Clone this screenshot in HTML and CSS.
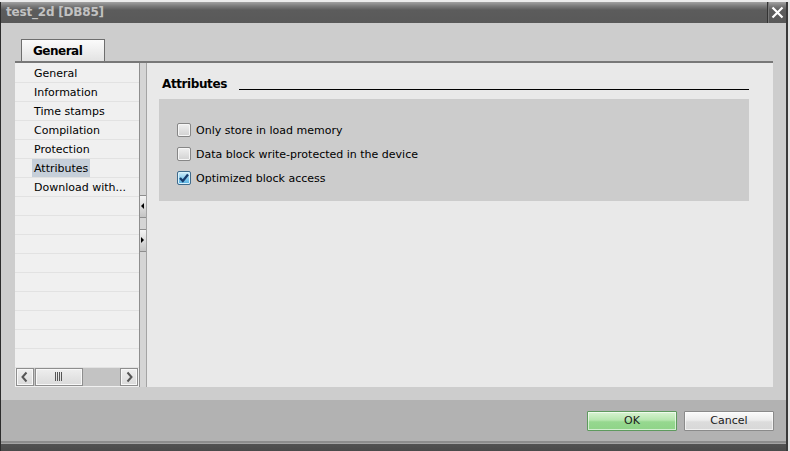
FILE: index.html
```html
<!DOCTYPE html>
<html lang="en">
<head>
<meta charset="utf-8">
<title>test_2d [DB85]</title>
<link rel="stylesheet" href="styles.css">
</head>
<body>
<div class="screen-strip"></div>
<div class="window">
  <div class="titlebar">
    <span class="title">test_2d [DB85]</span>
    <div class="close">
      <svg width="13" height="13" viewBox="0 0 13 13"><path d="M1.5 1.5 L11.5 11.5 M11.5 1.5 L1.5 11.5" stroke="#fff" stroke-width="2.2" fill="none"/></svg>
    </div>
  </div>
  <div class="body">
    <div class="tabs"><div class="tab">General</div></div>
    <div class="panel">
      <div class="nav">
        <ul class="nav-list">
          <li><span>General</span></li>
          <li><span>Information</span></li>
          <li><span>Time stamps</span></li>
          <li><span>Compilation</span></li>
          <li><span>Protection</span></li>
          <li><span class="selected">Attributes</span></li>
          <li><span>Download with...</span></li>
          <li></li><li></li><li></li><li></li><li></li><li></li><li></li><li></li><li></li>
        </ul>
        <div class="hscroll">
          <div class="sbtn">
            <svg width="16" height="16" viewBox="0 0 16 16"><path d="M9.5 3.5 L5.5 8 L9.5 12.5" stroke="#555" stroke-width="2" fill="none"/></svg>
          </div>
          <div class="thumb">
            <svg width="10" height="9" viewBox="0 0 10 9"><path d="M1.5 0 V9 M3.5 0 V9 M5.5 0 V9 M7.5 0 V9" stroke="#555" stroke-width="1" fill="none"/></svg>
          </div>
          <div class="track"></div>
          <div class="sbtn">
            <svg width="16" height="16" viewBox="0 0 16 16"><path d="M6.5 3.5 L10.5 8 L6.5 12.5" stroke="#555" stroke-width="2" fill="none"/></svg>
          </div>
        </div>
      </div>
      <div class="splitter">
        <div class="split-btn"><svg width="4" height="6" viewBox="0 0 4 6"><path d="M3 0 L0 3 L3 6 Z" fill="#000"/></svg></div>
        <div class="split-btn"><svg width="4" height="6" viewBox="0 0 4 6"><path d="M0 0 L3 3 L0 6 Z" fill="#000"/></svg></div>
      </div>
      <div class="content">
        <div class="heading">
          <span class="heading-text">Attributes</span>
          <div class="heading-line"></div>
        </div>
        <div class="attr-box">
          <div class="check-row">
            <span class="cb"></span>
            <span class="label">Only store in load memory</span>
          </div>
          <div class="check-row">
            <span class="cb"></span>
            <span class="label">Data block write-protected in the device</span>
          </div>
          <div class="check-row">
            <span class="cb checked">
              <svg width="12" height="12" viewBox="0 0 12 12"><path d="M2 6 L4.8 9 L10 2.5" stroke="#173a6c" stroke-width="2.3" fill="none"/></svg>
            </span>
            <span class="label">Optimized block access</span>
          </div>
        </div>
      </div>
    </div>
  </div>
  <div class="footer">
    <button class="btn ok">OK</button>
    <button class="btn cancel">Cancel</button>
  </div>
  <div class="bottom-edge"></div>
</div>
</body>
</html>
```

FILE: styles.css
```css
* {
  box-sizing: border-box;
  margin: 0;
  padding: 0;
}

html, body {
  width: 790px;
  height: 451px;
  overflow: hidden;
  background: #e4e4e4;
}

body {
  font-family: "DejaVu Sans", Tahoma, sans-serif;
  font-size: 11px;
  color: #000;
}

.screen-strip {
  height: 2px;
  background: #ececec;
}

.window {
  width: 788px;
  height: 449px;
  display: flex;
  flex-direction: column;
  border-left: 1px solid #2c2c2c;
  border-right: 2px solid #3a3a3a;
}

/* title bar */
.titlebar {
  height: 21px;
  display: flex;
  align-items: center;
  background: linear-gradient(#a2a2a2 0, #7a7a7a 4px, #5c5c5c 8px, #595959 100%);
}

.title {
  padding-left: 5px;
  font-weight: bold;
  font-size: 12px;
  letter-spacing: -0.2px;
  color: #c2c2c2;
}

.close {
  margin-left: auto;
  width: 19px;
  height: 100%;
  border-left: 1px solid #333;
  box-shadow: inset 1px 0 0 #777;
  display: flex;
  align-items: center;
  justify-content: center;
  padding-left: 1px;
}

/* body */
.body {
  flex: 1;
  background: #cdcdcd;
  padding: 16px 13px 13px 14px;
  display: flex;
  flex-direction: column;
}

.tabs {
  display: flex;
}

.tab {
  margin-left: 6px;
  width: 84px;
  height: 22px;
  border: 1px solid #6e6e6e;
  border-bottom: none;
  background: linear-gradient(#fbfbfb, #e3e3e3);
  font-weight: bold;
  font-size: 12px;
  letter-spacing: -0.5px;
  line-height: 22px;
  padding-left: 11px;
}

.panel {
  flex: 1;
  border-top: 2px solid #787878;
  display: flex;
  min-height: 0;
}

/* left navigation */
.nav {
  width: 124px;
  background: #f0f0f0;
  display: flex;
  flex-direction: column;
  padding-top: 1px;
}

.nav-list {
  list-style: none;
  flex: 1;
  overflow: hidden;
}

.nav-list li {
  height: 19px;
  border-bottom: 1px solid #e2e2e2;
  padding-left: 17px;
  white-space: nowrap;
}

.nav-list li span {
  display: inline-block;
  padding: 1px 2px 0;
  height: 18px;
  line-height: 18px;
}

.nav-list li span.selected {
  background: #c6cfd9;
}

.hscroll {
  height: 18px;
  margin: 0 1px 1px 1px;
  display: flex;
  background: #c3c3c3;
}

.sbtn, .thumb {
  border: 1px solid #8e8e8e;
  box-shadow: inset 0 0 0 1px #f8f8f8;
  background: linear-gradient(#eeeeee, #dadada);
  display: flex;
  align-items: center;
  justify-content: center;
}

.sbtn {
  width: 18px;
}

.thumb {
  width: 48px;
  margin-left: 1px;
}

.track {
  flex: 1;
}

/* splitter */
.splitter {
  width: 8px;
  background: #d5d5d5;
  border-left: 1px solid #8e8e8e;
  border-right: 1px solid #a4a4a4;
  padding-top: 132px;
  display: flex;
  flex-direction: column;
  gap: 11px;
}

.split-btn {
  height: 23px;
  border-top: 1px solid #8e8e8e;
  border-bottom: 1px solid #8e8e8e;
  background: linear-gradient(#f4f4f4, #c4c4c4);
  display: flex;
  align-items: center;
  padding-left: 1px;
}

/* content */
.content {
  flex: 1;
  background: #e9e9e9;
  padding-top: 11px;
}

.heading {
  display: flex;
  align-items: flex-start;
  height: 18px;
  padding-left: 15px;
  padding-right: 24px;
}

.heading-text {
  font-weight: bold;
  font-size: 12px;
  letter-spacing: -0.4px;
  line-height: 18px;
  padding-top: 1px;
}

.heading-line {
  flex: 1;
  height: 16px;
  margin-left: 12px;
  border-bottom: 1px solid #000;
}

.attr-box {
  margin: 7px 24px 0 12px;
  height: 102px;
  background: #cccccc;
  padding: 19px 0 11px 18px;
}

.check-row {
  height: 24px;
  display: flex;
  align-items: center;
}

.cb {
  width: 14px;
  height: 14px;
  border: 1px solid #868686;
  border-radius: 2px;
  box-shadow: inset 0 0 0 1px #f6f6f6;
  background: linear-gradient(#f0f0f0, #d2d2d2);
  display: flex;
  align-items: center;
  justify-content: center;
}

.cb.checked {
  border-color: #3f6b8c;
  box-shadow: inset 0 0 0 1px #d8f1fc;
  background: linear-gradient(#d4effb, #86cbee 55%, #55b0e0);
}

.label {
  margin-left: 5px;
  line-height: 14px;
  padding-top: 2px;
}

/* footer */
.footer {
  height: 42px;
  background: #b2b2b2;
  display: flex;
  justify-content: flex-end;
  gap: 7px;
  padding: 11px 12px 0 0;
}

.btn {
  width: 90px;
  height: 20px;
  font-family: "DejaVu Sans", Tahoma, sans-serif;
  font-size: 11px;
  color: #1a1a1a;
  border: 1px solid #8a8a8a;
  border-radius: 1px;
  box-shadow: inset 0 0 0 1px rgba(255, 255, 255, 0.6);
}

.btn.ok {
  border-color: #5e9a5e;
  background: linear-gradient(#d8f3d2, #b6e6ae 45%, #96d88f 55%, #8fd488);
}

.btn.cancel {
  background: linear-gradient(#fbfbfb, #ececec 45%, #dcdcdc 55%, #d8d8d8);
}

.bottom-edge {
  height: 10px;
  background: linear-gradient(#8c8c8c 0, #8c8c8c 2px, #a4a4a4 2px, #a4a4a4 3px, #525252 3px, #4a4a4a 100%);
}
```
